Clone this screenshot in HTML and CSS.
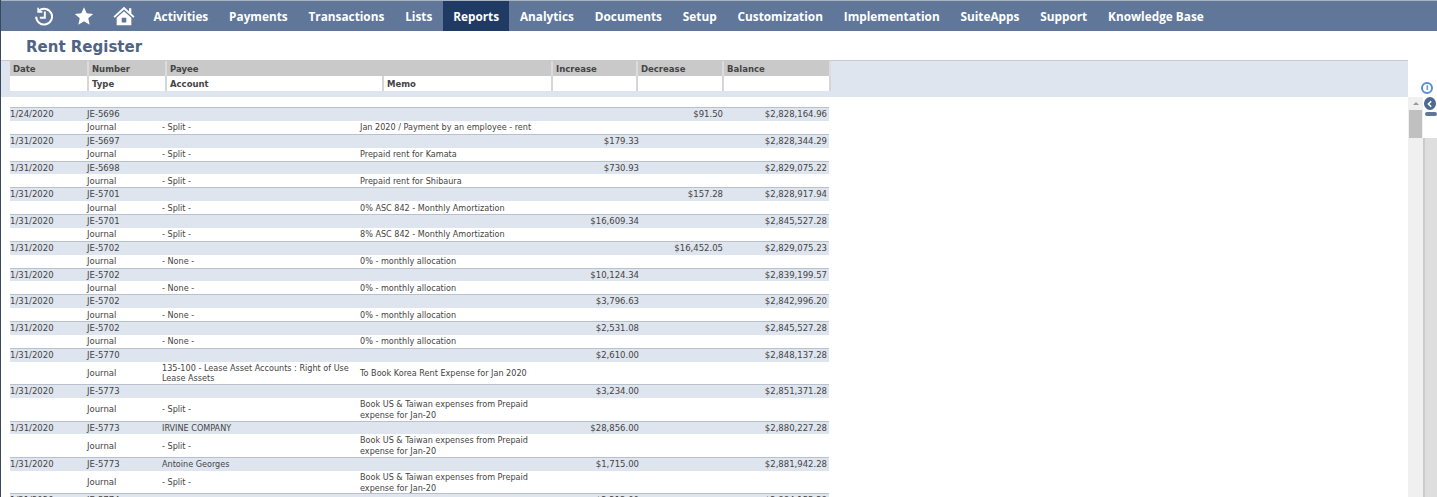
FILE: index.html
```html
<!DOCTYPE html>
<html lang="en">
<head>
  <meta charset="UTF-8">
  <meta name="viewport" content="width=device-width, initial-scale=1.0">
  <title>Rent Register</title>
  <link rel="stylesheet" href="styles.css">
</head>
<body>
  <nav class="navbar">
    <div class="nav-icons">
      <svg class="icon" viewBox="0 0 24 24" width="20" height="20" fill="none" stroke="#fff" stroke-width="2.4">
        <path d="M6 5.500A9.500 9.500 0 1 1 2.600 13"/>
        <path d="M13 6.500V14H7"/>
        <path d="M5 2v5h5" stroke-width="2"/>
      </svg>
      <svg class="icon" viewBox="0 0 24 24" width="20" height="20" fill="#fff">
        <path d="M12 1.500l3.200 7.200 7.800.8-5.900 5.200 1.700 7.700L12 18.400l-6.800 4 1.700-7.700L1 9.500l7.800-.8z"/>
      </svg>
      <svg class="icon" viewBox="0 0 24 24" width="22" height="22" fill="#fff">
        <path d="M12 2L0.500 12.500l1.400 1.500L12 5l10.100 9 1.400-1.500-3.500-3.200V3.500h-2.500v3.500z"/>
        <path fill-rule="evenodd" d="M12 6.800l-8 7.100V22h16v-8.100zM9.500 14h5v5h-5z"/>
      </svg>
    </div>
    <a class="nav-item">Activities</a>
    <a class="nav-item">Payments</a>
    <a class="nav-item">Transactions</a>
    <a class="nav-item">Lists</a>
    <a class="nav-item active">Reports</a>
    <a class="nav-item">Analytics</a>
    <a class="nav-item">Documents</a>
    <a class="nav-item">Setup</a>
    <a class="nav-item">Customization</a>
    <a class="nav-item">Implementation</a>
    <a class="nav-item">SuiteApps</a>
    <a class="nav-item">Support</a>
    <a class="nav-item">Knowledge Base</a>
  </nav>

  <h1 class="page-title">Rent Register</h1>

  <div class="main">
    <div class="content">
      <div class="head-band">
        <table class="head-table">
          <colgroup>
            <col class="h-date"><col class="h-number"><col class="h-payee"><col class="h-memo">
            <col class="h-inc"><col class="h-dec"><col class="h-bal">
          </colgroup>
          <tr class="head-top">
            <th>Date</th><th>Number</th><th colspan="2">Payee</th><th>Increase</th><th>Decrease</th><th>Balance</th>
          </tr>
          <tr class="head-bottom">
            <th></th><th>Type</th><th>Account</th><th>Memo</th><th></th><th></th><th></th>
          </tr>
        </table>
      </div>

      <table class="register">
        <colgroup>
          <col class="c-date"><col class="c-number"><col class="c-payee"><col class="c-memo">
          <col class="c-inc"><col class="c-dec"><col class="c-bal">
        </colgroup>
        <tbody id="rows"></tbody>
      </table>
    </div>

    <div class="side">
      <div class="side-top">
        <span class="info-btn">i</span>
      </div>
      <div class="side-body">
        <div class="scrollbar">
          <div class="arrow-box"><span class="arrow-up"></span></div>
          <div class="thumb"></div>
        </div>
        <div class="side-panel">
          <span class="back-btn">
            <svg viewBox="0 0 10 10" width="8" height="8" fill="none" stroke="#fff" stroke-width="2"><path d="M6.500 1.500L3 5l3.500 3.500"/></svg>
          </span>
          <div class="panel-top"><span class="pill"></span></div>
          <div class="panel-rest"></div>
        </div>
      </div>
    </div>
  </div>

  <script>
    const J = 'Book US & Taiwan expenses from Prepaid expense for Jan-20';
    const data = [
      ['1/24/2020', 'JE-5696', '', '- Split -', 'Jan 2020 / Payment by an employee - rent', '', '$91.50', '$2,828,164.96'],
      ['1/31/2020', 'JE-5697', '', '- Split -', 'Prepaid rent for Kamata', '$179.33', '', '$2,828,344.29'],
      ['1/31/2020', 'JE-5698', '', '- Split -', 'Prepaid rent for Shibaura', '$730.93', '', '$2,829,075.22'],
      ['1/31/2020', 'JE-5701', '', '- Split -', '0% ASC 842 - Monthly Amortization', '', '$157.28', '$2,828,917.94'],
      ['1/31/2020', 'JE-5701', '', '- Split -', '8% ASC 842 - Monthly Amortization', '$16,609.34', '', '$2,845,527.28'],
      ['1/31/2020', 'JE-5702', '', '- None -', '0% - monthly allocation', '', '$16,452.05', '$2,829,075.23'],
      ['1/31/2020', 'JE-5702', '', '- None -', '0% - monthly allocation', '$10,124.34', '', '$2,839,199.57'],
      ['1/31/2020', 'JE-5702', '', '- None -', '0% - monthly allocation', '$3,796.63', '', '$2,842,996.20'],
      ['1/31/2020', 'JE-5702', '', '- None -', '0% - monthly allocation', '$2,531.08', '', '$2,845,527.28'],
      ['1/31/2020', 'JE-5770', '', '135-100 - Lease Asset Accounts : Right of Use Lease Assets', 'To Book Korea Rent Expense for Jan 2020', '$2,610.00', '', '$2,848,137.28'],
      ['1/31/2020', 'JE-5773', '', '- Split -', J, '$3,234.00', '', '$2,851,371.28'],
      ['1/31/2020', 'JE-5773', 'IRVINE COMPANY', '- Split -', J, '$28,856.00', '', '$2,880,227.28'],
      ['1/31/2020', 'JE-5773', 'Antoine Georges', '- Split -', J, '$1,715.00', '', '$2,881,942.28'],
      ['1/31/2020', 'JE-5774', '', '- Split -', J, '$2,213.00', '', '$2,884,155.28']
    ];

    const tbody = document.getElementById('rows');
    data.forEach(function(d) {
      const top = document.createElement('tr');
      top.className = 'row-top';
      const bottom = document.createElement('tr');
      bottom.className = 'row-bottom';
      [d[0], d[1], d[2], '', d[5], d[6], d[7]].forEach(function(text, i) {
        const td = document.createElement('td');
        td.textContent = text;
        if (i > 3) td.className = 'num';
        if (i == 2) td.className = 'words';
        top.appendChild(td);
      });
      ['', 'Journal', d[3], d[4], '', '', ''].forEach(function(text, i) {
        const td = document.createElement('td');
        td.textContent = text;
        if (i == 2 || i == 3) td.className = 'words';
        bottom.appendChild(td);
      });
      tbody.appendChild(top);
      tbody.appendChild(bottom);
    });
  </script>
</body>
</html>
```

FILE: styles.css
```css
body {
  margin: 0;
  height: 497px;
  overflow: hidden;
  background: #fff;
  font-family: Tahoma, "DejaVu Sans", sans-serif;
  font-size: 8.5px;
  color: #444;
  border-left: 1px solid #39475f;
  box-sizing: border-box;
}
.navbar {
  display: flex;
  align-items: stretch;
  height: 30px;
  background: #607799;
  border-top: 1px solid #a9b3c2;
}
.nav-icons {
  display: flex;
  align-items: center;
  gap: 19.5px;
  padding-left: 33px;
  padding-right: 8px;
}
.nav-item {
  display: flex;
  align-items: center;
  padding: 0 10.45px;
  color: #fff;
  font-family: "Open Sans", sans-serif;
  font-size: 11.8px;
  font-weight: 700;
}
.nav-item.active {
  background: #1f3a63;
}
.page-title {
  margin: 0;
  height: 29px;
  padding: 7px 0 0 25px;
  box-sizing: border-box;
  font-family: "DejaVu Sans", sans-serif;
  font-size: 15px;
  font-weight: 700;
  color: #4f6484;
}
.main {
  display: flex;
}
.content {
  width: 1407px;
  flex: none;
}
.head-band {
  height: 37px;
  padding-left: 9px;
  box-sizing: border-box;
  background: #dfe5ee;
  border-top: 1px solid #c9c9c9;
}
.head-table, .register {
  border-collapse: collapse;
  table-layout: fixed;
}
.head-table {
  width: 820px;
}
.h-date { width: 78px; }
.h-number { width: 78px; }
.h-payee { width: 217px; }
.h-memo { width: 169px; }
.h-inc { width: 85px; }
.h-dec { width: 86px; }
.h-bal { width: 107px; }
.head-table th {
  padding: 0 0 0 3px;
  text-align: left;
  font-weight: 700;
  color: #444;
  overflow: hidden;
}
.head-top th {
  height: 15px;
  background: #c9c9c9;
  border-right: 2px solid #dcdcdc;
}
.head-bottom th {
  height: 15px;
  background: #fff;
  border-right: 2px solid #d6d6d6;
}
.register {
  width: 819px;
  margin: 10px 0 0 9px;
}
.c-date { width: 77px; }
.c-number { width: 75px; }
.c-payee { width: 198px; }
.c-memo { width: 196px; }
.c-inc { width: 83px; }
.c-dec { width: 84px; }
.c-bal { width: 106px; }
.register td {
  padding: 0;
  line-height: 10.8px;
  vertical-align: middle;
}
.register .words {
  font-size: 8.1px;
}
.register .num {
  text-align: right;
}
.register .num:last-child {
  padding-right: 2px;
}
.row-top td {
  height: 12.77px;
  background: #dfe5ee;
  border-top: 1px solid #b9c1cc;
}
.register .row-bottom td {
  height: 12px;
  padding-top: 1px;
  background: #fff;
}
.side {
  width: 28px;
  flex: none;
}
.side-top {
  height: 37px;
  padding: 22px 0 0 13px;
  box-sizing: border-box;
}
.info-btn {
  display: block;
  width: 12px;
  height: 12px;
  border-radius: 50%;
  background: #fff;
  border: 2px solid #5a8fd6;
  box-sizing: border-box;
  color: #3f77c4;
  font: 700 8px/8px "Liberation Sans", sans-serif;
  text-align: center;
}
.side-body {
  display: flex;
  height: 400px;
}
.scrollbar {
  width: 15px;
  flex: none;
  background: #f0f0f0;
}
.arrow-box {
  display: flex;
  justify-content: center;
  align-items: center;
  height: 13px;
}
.arrow-up {
  width: 0;
  height: 0;
  border: 3px solid transparent;
  border-top: 0;
  border-bottom: 3px solid #999;
}
.thumb {
  height: 28px;
  background: #c0c0c0;
  margin: 0 1px;
}
.side-panel {
  flex: 1;
  display: flex;
  flex-direction: column;
}
.back-btn {
  display: flex;
  flex: none;
  align-items: center;
  justify-content: center;
  width: 12px;
  height: 13px;
  margin-left: 1px;
  border-radius: 50%;
  background: #4f6a92;
}
.panel-top {
  height: 28px;
  flex: none;
}
.pill {
  display: block;
  width: 12px;
  height: 4px;
  margin: 2px 0 0 2px;
  border-radius: 2px;
  background: #5f7698;
}
.panel-rest {
  flex: 1;
  background: #dedede;
  border-left: 2px solid #cbcbcb;
}
```
